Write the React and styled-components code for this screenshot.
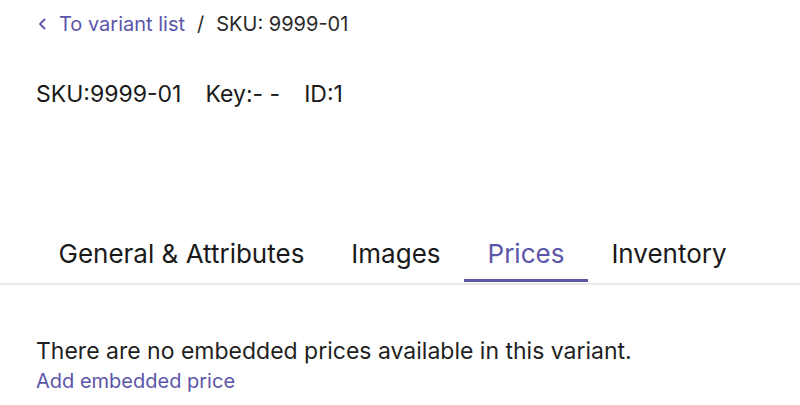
import React from "react";
import styled, { createGlobalStyle } from "styled-components";

const Global = createGlobalStyle`
  html, body { margin: 0; padding: 0; background: #fff; }
  body { font-family: Inter, "Noto Sans", sans-serif; color: #1f1f1f; }
`;

const Page = styled.div`
  width: 800px;
  height: 405px;
  overflow: hidden;
  display: flex;
  flex-direction: column;
`;

const Breadcrumbs = styled.nav`
  display: flex;
  align-items: center;
  gap: 8px;
  padding: 12px 0 0 38px;
  height: 24px;
  font-size: 20px;
`;

const BackLink = styled.a`
  display: flex;
  align-items: center;
  gap: 12px;
  color: #5b56a8;
  text-decoration: none;
  cursor: pointer;
`;

const Separator = styled.span`
  color: #2a2a2a;
  margin: 0 4px;
`;

const Current = styled.span`
  color: #2a2a2a;
`;

const Heading = styled.h1`
  margin: 44px 0 0 36px;
  font-size: 23px;
  font-weight: 400;
  line-height: 28px;
  display: flex;
  gap: 24px;
  color: #1a1a1a;
`;

const TabList = styled.div`
  margin-top: 124px;
  display: flex;
  padding-left: 35px;
  border-bottom: 2px solid #e8e8e8;
`;

const Tab = styled.button`
  background: none;
  border: none;
  font-family: inherit;
  font-size: 26px;
  line-height: 32px;
  padding: 6px 23.5px 13px;
  color: ${(p) => (p.$active ? "#5b56a8" : "#1a1a1a")};
  position: relative;
  cursor: pointer;
  &::after {
    content: "";
    position: absolute;
    left: 0;
    right: 0;
    bottom: 1px;
    height: 3px;
    background: ${(p) => (p.$active ? "#5b56a8" : "transparent")};
  }
`;

const Body = styled.div`
  padding: 52px 0 0 36px;
  display: flex;
  flex-direction: column;
  gap: 4px;
`;

const Message = styled.p`
  margin: 0;
  font-size: 23px;
  line-height: 28px;
  color: #1f1f1f;
`;

const AddLink = styled.a`
  font-size: 20px;
  line-height: 24px;
  color: #5b56a8;
  cursor: pointer;
`;

const Chevron = () => (
  <svg width="9" height="12" viewBox="0 0 9 12" fill="none">
    <path d="M6.5 1.5 L2 6 L6.5 10.5" stroke="#5b56a8" strokeWidth="1.8" strokeLinecap="round" strokeLinejoin="round" />
  </svg>
);

const tabs = ["General & Attributes", "Images", "Prices", "Inventory"];

export default function App() {
  return (
    <Page>
      <Global />
      <Breadcrumbs>
        <BackLink>
          <Chevron />
          To variant list
        </BackLink>
        <Separator>/</Separator>
        <Current>SKU: 9999-01</Current>
      </Breadcrumbs>
      <Heading>
        <span>SKU:9999-01</span>
        <span>Key:- -</span>
        <span>ID:1</span>
      </Heading>
      <TabList>
        {tabs.map((t) => (
          <Tab key={t} $active={t === "Prices"}>
            {t}
          </Tab>
        ))}
      </TabList>
      <Body>
        <Message>There are no embedded prices available in this variant.</Message>
        <AddLink>Add embedded price</AddLink>
      </Body>
    </Page>
  );
}
